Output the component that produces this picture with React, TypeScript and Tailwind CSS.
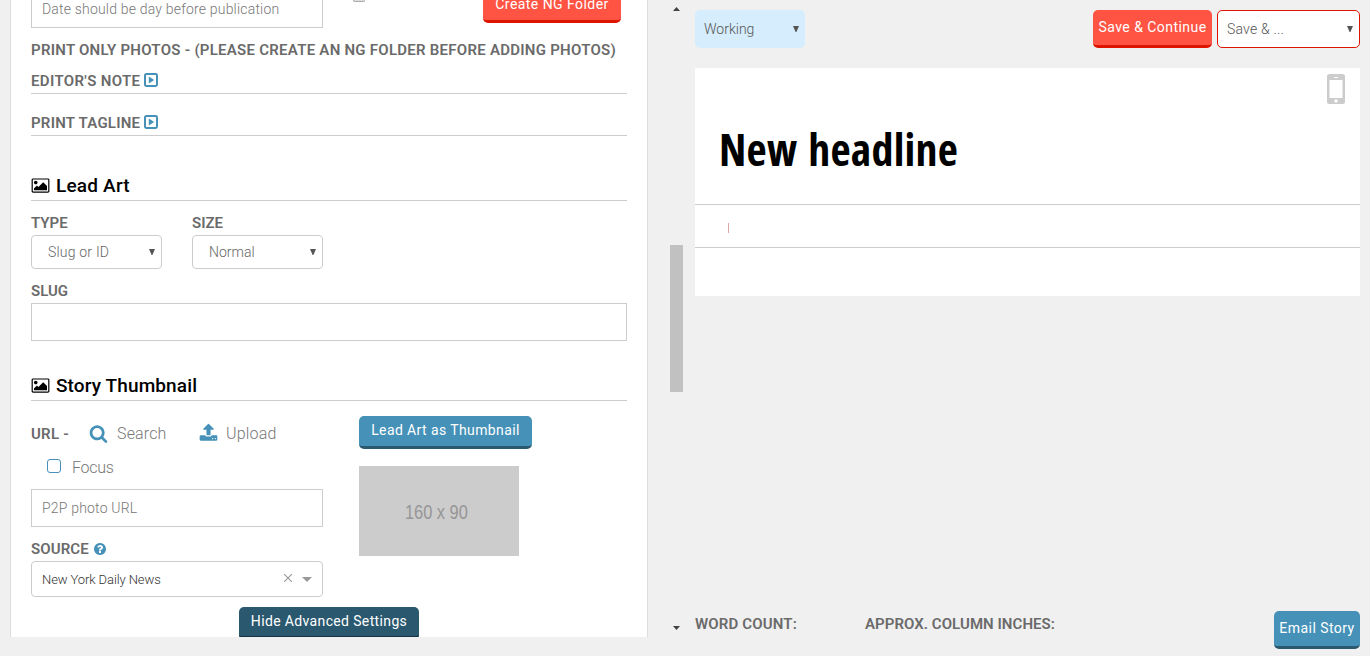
import React from "react";

const label = "text-[15px] font-semibold text-[#6a6a6a] whitespace-nowrap leading-none";
const faint = "font-light text-[#777] whitespace-nowrap leading-none";

function CaretSquare() {
  return (
    <svg viewBox="0 0 14 14" className="mb-px ml-1 h-[14px] w-[14px] shrink-0">
      <rect x="1" y="1" width="12" height="12" rx="1.4" fill="none" stroke="#4591b8" strokeWidth="2" />
      <path d="M4.8 3.4 L10.2 7 L4.8 10.6 Z" fill="#4591b8" />
    </svg>
  );
}

function PictureIcon() {
  return (
    <svg viewBox="0 0 2048 1792" className="mr-[5px] mt-px h-[17px] w-[19px] shrink-0 fill-black">
      <path d="M704 576q0 80-56 136t-136 56-136-56-56-136 56-136 136-56 136 56 56 136zm1024 384v448h-1408v-192l320-320 160 160 512-512zm96-704h-1600q-13 0-22.5 9.5t-9.5 22.5v1216q0 13 9.5 22.5t22.5 9.5h1600q13 0 22.5-9.5t9.5-22.5v-1216q0-13-9.5-22.5t-22.5-9.5zm160 32v1216q0 66-47 113t-113 47h-1600q-66 0-113-47t-47-113v-1216q0-66 47-113t113-47h1600q66 0 113 47t47 113z" />
    </svg>
  );
}

function SearchIcon() {
  return (
    <svg viewBox="0 0 1792 1792" className="h-[19px] w-[19px] shrink-0 fill-[#4591b8]">
      <path d="M1216 832q0-185-131.5-316.5t-316.5-131.5-316.5 131.5-131.5 316.5 131.5 316.5 316.5 131.5 316.5-131.5 131.5-316.5zm512 832q0 52-38 90t-90 38q-54 0-90-38l-343-342q-179 124-399 124-143 0-273.5-55.5t-225-150-150-225-55.5-273.5 55.5-273.5 150-225 225-150 273.5-55.5 273.5 55.5 225 150 150 225 55.5 273.5q0 220-124 399l343 343q37 37 37 90z" />
    </svg>
  );
}

function UploadIcon() {
  return (
    <svg viewBox="0 0 1792 1792" className="mb-[2px] h-[19px] w-[19px] shrink-0 fill-[#4591b8]">
      <path d="M1344 1472q0-26-19-45t-45-19-45 19-19 45 19 45 45 19 45-19 19-45zm256 0q0-26-19-45t-45-19-45 19-19 45 19 45 45 19 45-19 19-45zm128-224v320q0 40-28 68t-68 28h-1472q-40 0-68-28t-28-68v-320q0-40 28-68t68-28h427q21 56 70.5 92t110.5 36h256q61 0 110.5-36t70.5-92h427q40 0 68 28t28 68zm-325-648q-17 40-59 40h-256v448q0 26-19 45t-45 19h-256q-26 0-45-19t-19-45v-448h-256q-42 0-59-40-17-39 14-69l448-448q18-19 45-19t45 19l448 448q31 30 14 69z" />
    </svg>
  );
}

function HelpIcon() {
  return (
    <svg viewBox="128 128 1536 1536" className="ml-[5px] h-[12px] w-[12px] shrink-0 fill-[#4591b8]">
      <path d="M1024 1376v-192q0-14-9-23t-23-9h-192q-14 0-23 9t-9 23v192q0 14 9 23t23 9h192q14 0 23-9t9-23zm256-672q0-88-55.5-163t-138.5-116-170-41q-243 0-371 213-15 24 8 42l132 100q7 6 19 6 16 0 25-12 53-68 86-92 34-24 86-24 48 0 85.5 26t37.5 59q0 38-20 61t-68 45q-63 28-115.5 86.5t-52.5 125.5v36q0 14 9 23t23 9h192q14 0 23-9t9-23q0-19 21.5-49.5t54.5-49.5q32-18 49-28.5t46-35 44.5-48 28-60.5 12.5-81zm384 192q0 209-103 385.5t-279.5 279.5-385.5 103-385.5-103-279.5-279.5-103-385.5 103-385.5 279.5-279.5 385.5-103 385.5 103 279.5 279.5 103 385.5z" />
    </svg>
  );
}

function PhoneIcon() {
  return (
    <svg viewBox="0 0 18 30" className="h-[30px] w-[18px]">
      <rect width="18" height="30" rx="2.5" fill="#ccc" />
      <rect x="2.5" y="6" width="13" height="18" fill="#fff" />
      <rect x="7" y="3" width="4" height="1" fill="#fff" />
      <circle cx="9" cy="27" r="1.8" fill="#fff" />
    </svg>
  );
}

function Down() {
  return (
    <svg viewBox="0 0 6 6" className="h-[6px] w-[6px] shrink-0">
      <path d="M0 0 H6 L3.4 6 H2.6 Z" fill="#555" />
    </svg>
  );
}

function Select({ text, className }: { text: string; className: string }) {
  return (
    <div className={"flex items-center justify-between whitespace-nowrap rounded font-light text-sm leading-none " + className}>
      <span>{text}</span>
      <Down />
    </div>
  );
}

const buttonText = "whitespace-nowrap pb-[2px] text-sm leading-none text-white ";

function Settings() {
  return (
    <section className="ml-[10px] h-[637px] w-[638px] shrink-0 overflow-hidden border-x border-[#ddd] bg-white px-5">
      <div className="flex h-[28px] items-start">
        <div className="flex h-[28px] w-[292px] items-center border border-t-0 border-[#ccc] px-[10px] pb-[9px]">
          <span className={faint + " text-sm tracking-[0.19px]"}>Date should be day before publication</span>
        </div>
        <div className="ml-[30px] h-[2px] w-[12px] rounded-b-[3px] border border-t-0 border-[#aaa] bg-[#ddd]" />
        <div className="ml-[118px] flex h-[23px] w-[138px] justify-center rounded-b-[5px] border-b-[3px] border-[#dc1400] bg-[#ff5443]">
          <span className="mt-[-4px] whitespace-nowrap text-sm leading-4 tracking-[0.45px] text-white">Create NG Folder</span>
        </div>
      </div>
      <div className="mt-[5px] flex h-[34px] items-center">
        <span className={label + " tracking-[0.26px]"}>PRINT ONLY PHOTOS - (PLEASE CREATE AN NG FOLDER BEFORE ADDING PHOTOS)</span>
      </div>
      <div className="mt-px flex h-[26px] items-center border-b border-[#ccc]">
        <span className={label + " pt-px tracking-[0.35px]"}>EDITOR'S NOTE</span>
        <CaretSquare />
      </div>
      <div className="mt-[16px] flex h-[26px] items-center border-b border-[#ccc]">
        <span className={label + " pt-px tracking-[0.24px]"}>PRINT TAGLINE</span>
        <CaretSquare />
      </div>
      <h2 className="mt-[34px] flex h-[31px] items-center border-b border-[#ccc] text-[19px] font-medium leading-none tracking-[0.2px] text-black">
        <PictureIcon />
        <span className="ml-px">Lead Art</span>
      </h2>
      <div className="mt-[12px] flex gap-[30px]">
        <div className="w-[131px]">
          <div className="flex h-[22px] items-center pb-[2px]">
            <span className={label}>TYPE</span>
          </div>
          <Select text="Slug or ID" className="h-[34px] border border-[#ccc] pl-4 pr-[6px] tracking-[0.2px] text-[#666]" />
        </div>
        <div className="w-[131px]">
          <div className="flex h-[22px] items-center pb-[2px]">
            <span className={label}>SIZE</span>
          </div>
          <Select text="Normal" className="h-[34px] border border-[#ccc] pl-4 pr-[6px] text-[#666]" />
        </div>
      </div>
      <div className="mt-[11px] flex h-[23px] items-center">
        <span className={label}>SLUG</span>
      </div>
      <div className="h-[38px] border border-[#ccc]" />
      <h2 className="mt-[29px] flex h-[31px] items-center border-b border-[#ccc] text-[19px] font-medium leading-none tracking-[0.12px] text-black">
        <PictureIcon />
        <span className="ml-px">Story Thumbnail</span>
      </h2>
      <div className="flex">
        <div className="w-[292px]">
          <div className="mt-[22px] flex h-[20px] items-center">
            <span className={label + " w-[58px] pt-[2px] tracking-[0.25px]"}>URL -</span>
            <SearchIcon />
            <span className={faint + " ml-[9px] w-[82px] pt-[2px] text-base tracking-[0.15px]"}>Search</span>
            <UploadIcon />
            <span className={faint + " ml-[8px] pt-[2px] text-base tracking-[0.2px]"}>Upload</span>
          </div>
          <div className="mt-[12px] flex h-[24px] items-center pl-4">
            <div className="mb-[2px] h-[14px] w-[14px] rounded-[3px] border-[1.5px] border-[#4591b8]" />
            <span className={faint + " ml-[11px] pt-[2px] text-base tracking-[-0.3px]"}>Focus</span>
          </div>
          <div className="mt-[10px] flex h-[38px] items-center border border-[#ccc] px-[10px]">
            <span className={faint + " text-sm tracking-[0.2px]"}>P2P photo URL</span>
          </div>
          <div className="mt-[11px] flex h-[22px] items-center">
            <span className={label + " tracking-[0.1px]"}>SOURCE</span>
            <HelpIcon />
          </div>
          <div className="mt-px flex h-[36px] items-center rounded border border-[#ccc] pl-[10px] pr-[10px]">
            <span className="grow whitespace-nowrap pt-px text-[13px] font-light leading-none tracking-[-0.1px] text-[#333]">New York Daily News</span>
            <svg viewBox="0 0 8 8" className="mb-[2px] mr-[10px] h-2 w-2">
              <path d="M0 0 L8 8 M8 0 L0 8" stroke="#999" strokeWidth="1.1" />
            </svg>
            <svg viewBox="0 0 10 5" className="h-[5px] w-[10px]">
              <path d="M0 0 H10 L5 5 Z" fill="#999" />
            </svg>
          </div>
        </div>
        <div className="ml-9 pt-[15px]">
          <div className="flex h-[33px] w-[173px] items-center justify-center rounded-[5px] border-b-[3px] border-[#2a586f] bg-[#4591b8]">
            <span className={buttonText + "tracking-[0.4px]"}>Lead Art as Thumbnail</span>
          </div>
          <div className="mt-[17px] flex h-[90px] w-[160px] items-center justify-center bg-[#ccc] pr-[5px] pt-[2px]">
            <span className="scale-x-[0.82] whitespace-nowrap font-['Liberation_Sans'] text-[20px] leading-none text-[#969696]">160 x 90</span>
          </div>
        </div>
      </div>
      <div className="ml-[208px] mt-[10px] flex h-[33px] w-[180px] items-center justify-center rounded-[5px] border-b-[4px] border-[#15303e] bg-[#2a586f]">
        <span className={buttonText + "tracking-[0.36px]"}>Hide Advanced Settings</span>
      </div>
    </section>
  );
}

function Scrollbar() {
  return (
    <div className="ml-[22px] flex h-[656px] w-[13px] shrink-0 flex-col items-center">
      <svg viewBox="0 0 7 4" className="mt-[7px] h-[4px] w-[7px]">
        <path d="M0 4 L3.5 0 L7 4 Z" fill="#444" />
      </svg>
      <div className="mt-[234px] h-[147px] w-[13px] bg-[#c1c1c1]" />
      <svg viewBox="0 0 7 4" className="mt-[234px] h-[4px] w-[7px]">
        <path d="M0 0 L3.5 4 L7 0 Z" fill="#444" />
      </svg>
    </div>
  );
}

function Preview() {
  return (
    <main className="ml-[12px] flex h-[656px] w-[665px] shrink-0 flex-col">
      <div className="mt-[10px] flex h-[38px]">
        <Select text="Working" className="w-[110px] rounded-[5px] bg-[#d5edfc] pl-[9px] pr-[6px] text-[#555]" />
        <div className="ml-auto flex w-[119px] items-center justify-center rounded-[5px] border-b-[3px] border-[#dc1400] bg-[#ff5443]">
          <span className={buttonText + "tracking-[0.45px]"}>Save &amp; Continue</span>
        </div>
        <Select text="Save & ..." className="ml-[5px] w-[143px] rounded-[5px] border border-[#dc1400] bg-white pl-[9px] pr-[6px] tracking-[0.2px] text-[#555]" />
      </div>
      <article className="mt-5 h-[228px] bg-white">
        <div className="flex h-[36px] items-end justify-end pr-[15px]">
          <PhoneIcon />
        </div>
        <div className="flex h-[101px] items-start border-b border-[#ccc] pl-[24px] pt-[15px]">
          <h1 className="whitespace-nowrap font-['Open_Sans'] text-[44px] font-bold leading-[60px] tracking-[0.2px] text-black [font-stretch:75%] [word-spacing:3px]">New headline</h1>
        </div>
        <div className="flex h-[43px] items-center border-b border-[#ccc] pl-[33px]">
          <div className="mt-[3px] h-[10px] w-px bg-[#dba8a8]" />
        </div>
      </article>
      <div className="mt-[315px] flex h-[38px]">
        <span className={label + " mt-[6px] w-[170px] tracking-[0.15px]"}>WORD COUNT:</span>
        <span className={label + " mt-[6px] tracking-[0.05px]"}>APPROX. COLUMN INCHES:</span>
        <div className="ml-auto flex w-[86px] items-center justify-center rounded-[5px] border-b-[3px] border-[#2a586f] bg-[#4591b8]">
          <span className={buttonText + "tracking-[0.45px]"}>Email Story</span>
        </div>
      </div>
    </main>
  );
}

export default function App() {
  return (
    <div className="flex h-[656px] w-[1370px] overflow-hidden bg-[#f0f0f0] font-[Roboto,'Liberation_Sans',sans-serif]">
      <Settings />
      <Scrollbar />
      <Preview />
    </div>
  );
}
